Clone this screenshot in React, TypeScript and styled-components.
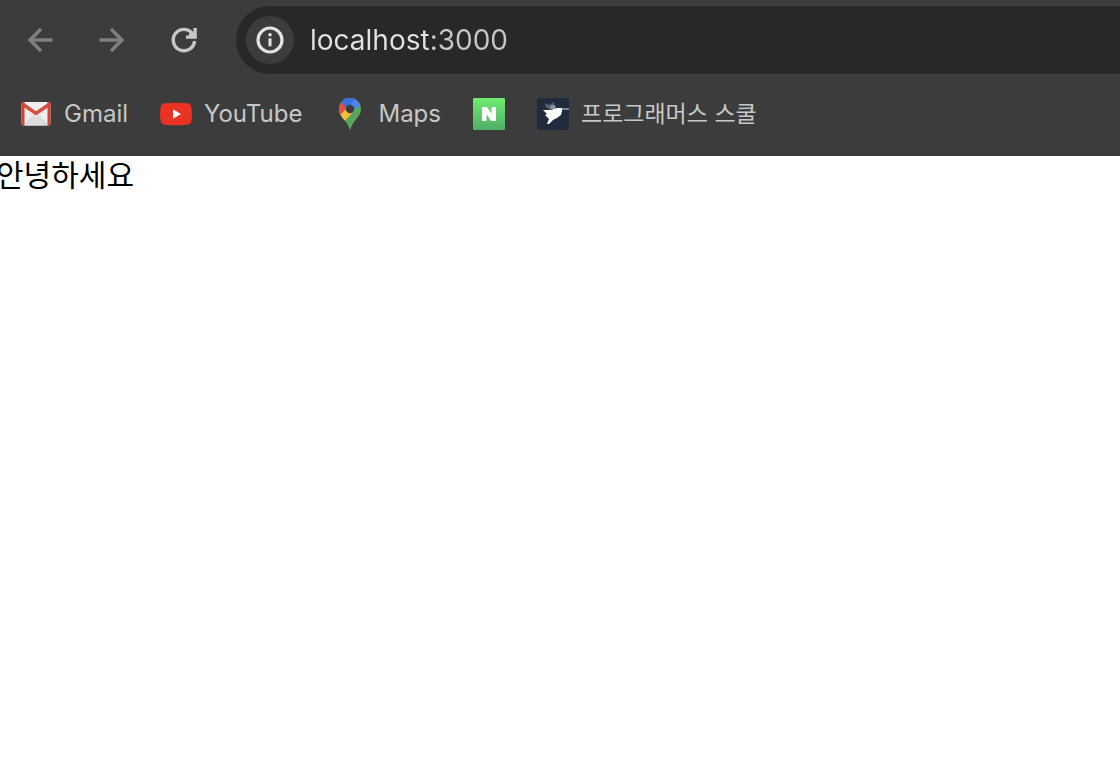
import React from "react";
import styled, { createGlobalStyle } from "styled-components";

const GlobalStyle = createGlobalStyle`
  *, *::before, *::after { box-sizing: border-box; }
  body { margin: 0; background: #ffffff; overflow-x: hidden; }
`;

const Window = styled.div`
  min-height: 100vh;
  display: flex;
  flex-direction: column;
  font-family: Inter, "Noto Sans CJK KR", sans-serif;
`;

const Chrome = styled.header`
  background: #3c3c3c;
  padding: 6px 0 26px 16px;
`;

const Toolbar = styled.div`
  display: flex;
  align-items: center;
  gap: 24px;
`;

const NavButton = styled.button<{ $active?: boolean }>`
  display: grid;
  place-items: center;
  width: 48px;
  height: 48px;
  flex: none;
  padding: 0;
  border: 0;
  border-radius: 50%;
  background: transparent;
  color: ${(p) => (p.$active ? "#c7c7c7" : "#7d7d7d")};
`;

const AddressBar = styled.div`
  flex: 1;
  min-width: 0;
  height: 68px;
  margin-left: 4px;
  padding-left: 10px;
  display: flex;
  align-items: center;
  gap: 16px;
  border-radius: 34px 0 0 34px;
  background: #282828;
`;

const InfoButton = styled(NavButton)`
  background: #3c3c3c;
  color: #e3e3e3;
`;

const Address = styled.input`
  flex: 1;
  min-width: 0;
  height: 40px;
  padding: 0;
  border: 0;
  outline: 0;
  font: 400 28px/40px Inter, sans-serif;
  color: transparent;
  caret-color: #e3e3e3;
  background: linear-gradient(90deg, #e3e3e3 118px, #c7c7c7 118px);
  -webkit-background-clip: text;
  background-clip: text;
`;

const Bookmarks = styled.nav`
  display: flex;
  align-items: center;
  gap: 32px;
  height: 32px;
  margin-top: 24px;
  padding-left: 4px;
`;

const Bookmark = styled.a<{ $korean?: boolean }>`
  display: flex;
  align-items: center;
  gap: 12px;
  color: #c7c7c7;
  font-size: ${(p) => (p.$korean ? 23 : 24)}px;
  line-height: 32px;
  white-space: nowrap;
  text-decoration: none;

  svg { flex: none; }
`;

const Content = styled.main`
  flex: 1;
  color: #000000;
  font-size: 30px;
  line-height: 38px;
`;

const Greeting = styled.p`
  margin: 0 0 0 -4px;
`;

const ArrowIcon = ({ forward }: { forward?: boolean }) => (
  <svg width="32" height="32" viewBox="0 0 32 32" fill="none" stroke="currentColor" strokeWidth="3.5">
    <path d={forward ? "M3.5 16H26M15 5L26 16L15 27" : "M28.5 16H6M17 5L6 16L17 27"} />
  </svg>
);

const ReloadIcon = () => (
  <svg width="32" height="32" viewBox="0 0 32 32" fill="none" stroke="currentColor" strokeWidth="3.4">
    <path d="M26.6 17A10.7 10.7 0 1 1 24.5 9.6L26.5 12.5" />
    <path d="M27.1 4V13.1H18" />
    <path d="M22 8L27 13H20Z" fill="currentColor" stroke="none" />
  </svg>
);

const InfoIcon = () => (
  <svg width="32" height="32" viewBox="0 0 32 32" fill="none">
    <circle cx="16" cy="16" r="12" stroke="currentColor" strokeWidth="3.2" />
    <circle cx="16" cy="10.7" r="1.8" fill="currentColor" />
    <path d="M16 14.3V22.3" stroke="currentColor" strokeWidth="3" />
  </svg>
);

const GmailIcon = () => (
  <svg width="32" height="32" viewBox="0 0 32 32">
    <rect x="1.5" y="4" width="29" height="23.5" rx="2" fill="#eeeeee" />
    <path d="M5 25L13 17L16 19L19 17L27 25V27.5H5Z" fill="#dcdcdc" />
    <path d="M1.5 6Q1.5 4 3 4H4.5V27.5H3Q1.5 27.5 1.5 26Z" fill="#cf4435" />
    <path d="M30.5 6Q30.5 4 29 4H27.5V27.5H29Q30.5 27.5 30.5 26Z" fill="#cf4435" />
    <path d="M3 6.5L16 15.5L29 6.5" fill="none" stroke="#d54b3d" strokeWidth="3.4" />
  </svg>
);

const YouTubeIcon = () => (
  <svg width="32" height="32" viewBox="0 0 32 32">
    <path d="M5 5.3Q16 4.4 27 5.3Q31 5.5 31.5 9.5Q32.3 16 31.5 22.5Q31 26.5 27 26.7Q16 27.8 5 26.7Q1 26.5 .5 22.5Q-.3 16 .5 9.5Q1 5.5 5 5.3Z" fill="#ea3323" />
    <path d="M13 11.2L21 16L13 20.8Z" fill="#ffffff" />
  </svg>
);

const MapsIcon = () => (
  <svg width="32" height="32" viewBox="0 0 32 32">
    <clipPath id="pin">
      <path d="M16 0C9.8 0 5 4.8 5 11C5 15.5 7.4 18.4 10.5 22C13 25 14.7 28 15.4 31Q16 32.6 16.6 31C17.3 28 19 25 21.5 22C24.6 18.4 27 15.5 27 11C27 4.8 22.2 0 16 0Z" />
    </clipPath>
    <g clipPath="url(#pin)">
      <rect width="32" height="32" fill="#58a55c" />
      <path d="M0 8L16 11L25 5L7 26L0 24Z" fill="#f1be42" />
      <path d="M0 0H9L16 11L7 20L0 12Z" fill="#d95140" />
      <path d="M6 17L16 7L19.5 13.5L10 24Z" fill="#f1be42" />
      <path d="M7.5 3.5L0 0H32V4L26.5 7L17 14Z" fill="#5083ec" />
      <path d="M5 2L16 -2L21 1L13 10Z" fill="#3871dc" />
    </g>
    <circle cx="16" cy="11" r="4.2" fill="#3c3c3c" />
  </svg>
);

const NaverIcon = () => (
  <svg width="32" height="32" viewBox="0 0 32 32">
    <defs>
      <linearGradient id="green" x2="0" y2="1">
        <stop stopColor="#70ec70" />
        <stop offset="1" stopColor="#50ae68" />
      </linearGradient>
    </defs>
    <rect width="32" height="32" rx="1" fill="url(#green)" />
    <path d="M9 9H14L18.5 15.7V9H23V23H18L13.5 16.3V23H9Z" fill="#ffffff" />
  </svg>
);

const BirdIcon = () => (
  <svg width="32" height="32" viewBox="0 0 32 32">
    <rect width="32" height="32" rx="3" fill="#202b3d" />
    <path d="M8 5L12 7L17 4V10L13 12L9 9Z" fill="#596273" />
    <path d="M6 12L14 12L20 10L25 10V13L24 17L20 20L16 22L12 26H10L12 21L8 17L10 16Z" fill="#ffffff" />
    <path d="M13 8L18 7L19 11H14Z" fill="#8e95a0" />
    <path d="M25 10H32V12H25Z" fill="#7b838f" />
  </svg>
);

export default function App() {
  return (
    <Window>
      <GlobalStyle />
      <Chrome>
        <Toolbar>
          <NavButton aria-label="Back"><ArrowIcon /></NavButton>
          <NavButton aria-label="Forward"><ArrowIcon forward /></NavButton>
          <NavButton $active aria-label="Reload"><ReloadIcon /></NavButton>
          <AddressBar>
            <InfoButton aria-label="View site information"><InfoIcon /></InfoButton>
            <Address aria-label="Address" defaultValue="localhost:3000" spellCheck={false} />
          </AddressBar>
        </Toolbar>
        <Bookmarks aria-label="Bookmarks">
          <Bookmark href="#gmail"><GmailIcon />Gmail</Bookmark>
          <Bookmark href="#youtube"><YouTubeIcon />YouTube</Bookmark>
          <Bookmark href="#maps"><MapsIcon />Maps</Bookmark>
          <Bookmark href="#naver" aria-label="Naver"><NaverIcon /></Bookmark>
          <Bookmark href="#school" $korean><BirdIcon />프로그래머스 스쿨</Bookmark>
        </Bookmarks>
      </Chrome>
      <Content lang="ko">
        <Greeting>안녕하세요</Greeting>
      </Content>
    </Window>
  );
}
